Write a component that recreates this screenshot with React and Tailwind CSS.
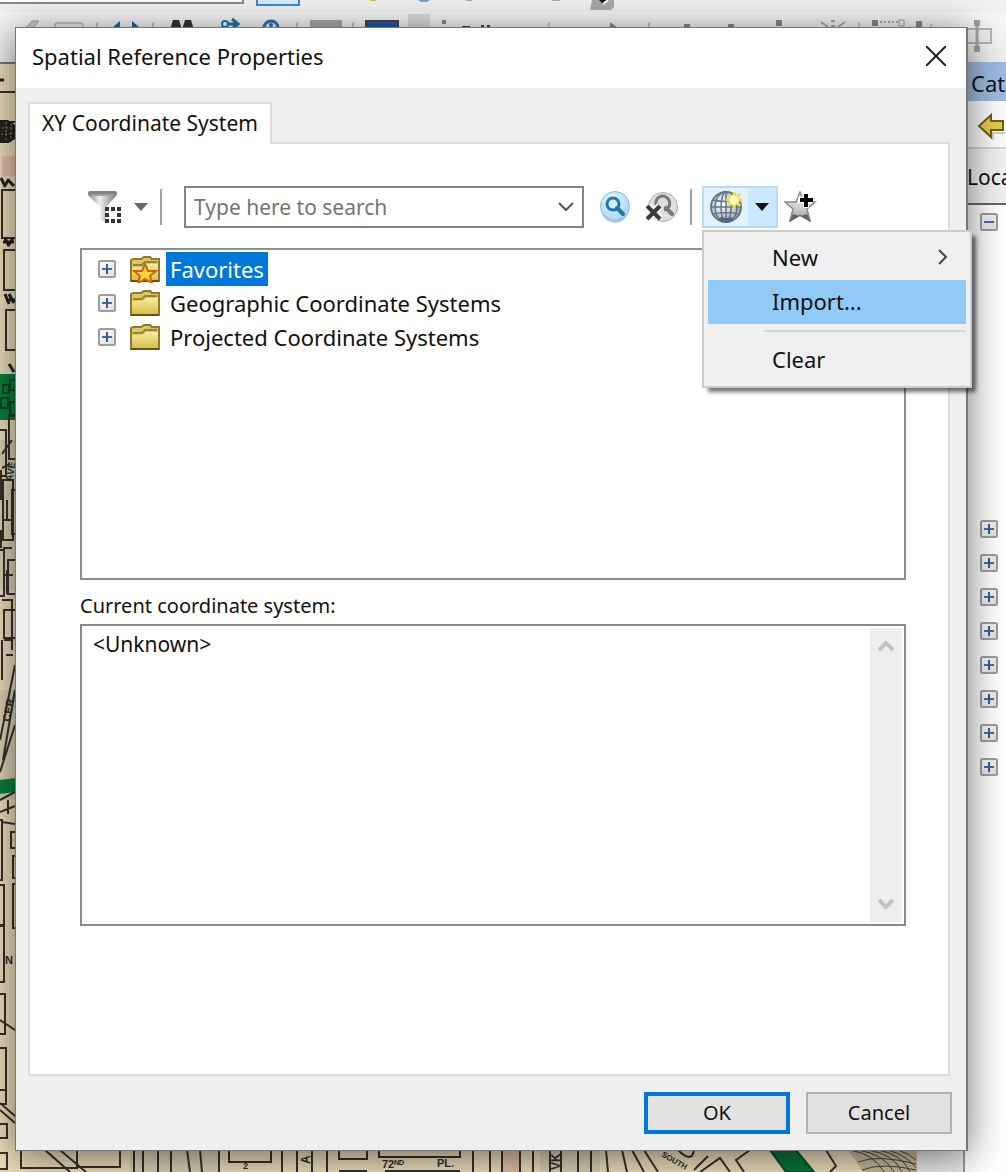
import React from "react";

const UI = "font-['Noto_Sans','Open_Sans',sans-serif]";

function Expander({ open = false }) {
  return (
    <svg width="18" height="18" viewBox="0 0 18 18" className="shrink-0" aria-hidden="true">
      <defs>
        <linearGradient id="exp" x1="0" y1="0" x2="1" y2="1">
          <stop offset="0" stopColor="#ffffff" />
          <stop offset="1" stopColor="#dedede" />
        </linearGradient>
      </defs>
      <rect x="1" y="1" width="16" height="16" rx="1.5" fill="url(#exp)" stroke="#9d9d9d" strokeWidth="2" />
      <path d="M4 9h10" stroke="#4d68ad" strokeWidth="2" />
      {!open && <path d="M9 4v10" stroke="#3f5798" strokeWidth="2" />}
    </svg>
  );
}

function Folder({ star = false }) {
  return (
    <svg width="30" height="28" viewBox="0 0 30 28" className="shrink-0" aria-hidden="true">
      <defs>
        <linearGradient id="fold" x1="0" y1="0" x2="0" y2="1">
          <stop offset="0" stopColor="#f6eca0" />
          <stop offset="1" stopColor="#d8bf4c" />
        </linearGradient>
      </defs>
      <path d="M1 26V5l2-1h8l3-2h6l2 2h7v22z" fill="#d9c768" stroke="#8f7b2c" strokeWidth="2" />
      <path d="M3 10h9l3-3h12" fill="none" stroke="#9a8534" strokeWidth="2" />
      <path d="M2 25V12h11l3-3h12v16z" fill="url(#fold)" />
      <path d="M1 26h28" stroke="#665412" strokeWidth="2" />
      {star && (
        <path
          d="M15 9l3 7h8l-6 5 2 7-7-4-7 4 2-7-6-5h8z"
          fill="#ffd53a"
          stroke="#cf6412"
          strokeWidth="2"
        />
      )}
    </svg>
  );
}

function FilterIcon() {
  return (
    <svg width="34" height="34" viewBox="0 0 34 34" aria-hidden="true">
      <defs>
        <linearGradient id="fun" x1="0" y1="0" x2="1" y2="0">
          <stop offset="0" stopColor="#8c8c8c" />
          <stop offset=".4" stopColor="#f1f1f1" />
          <stop offset="1" stopColor="#777" />
        </linearGradient>
      </defs>
      <path d="M1 4h27v2L18 17v15l-6-2V17L1 6z" fill="url(#fun)" />
      <rect x="0" y="1" width="29" height="5" rx="2" fill="#828282" />
      <path d="M3 5h23" stroke="#bbb" />
      <rect x="18" y="18" width="15" height="15" fill="#fff" />
      <g fill="#333">
        {[17, 23, 29].map((x) =>
          [17, 23, 29].map((y) => (x === 23 && y === 23 ? null : <rect key={x + "-" + y} x={x} y={y} width="4" height="4" />))
        )}
      </g>
    </svg>
  );
}

function SearchIcon() {
  return (
    <svg width="32" height="34" viewBox="0 0 32 34" aria-hidden="true">
      <defs>
        <radialGradient id="srch" cx=".4" cy=".35" r=".7">
          <stop offset="0" stopColor="#eaf6ff" />
          <stop offset="1" stopColor="#a5d3f4" />
        </radialGradient>
      </defs>
      <ellipse cx="16" cy="18" rx="14" ry="15" fill="#c5c9cc" />
      <circle cx="16" cy="16" r="14.5" fill="url(#srch)" stroke="#86bce3" />
      <circle cx="14" cy="14" r="6" fill="#d9efff" stroke="#1c77ad" strokeWidth="3" />
      <path d="M18 18l6 6" stroke="#1c77ad" strokeWidth="4" strokeLinecap="round" />
    </svg>
  );
}

function ClearSearchIcon() {
  return (
    <svg width="32" height="34" viewBox="0 0 32 34" aria-hidden="true">
      <circle cx="17" cy="17" r="14.5" fill="#dedede" stroke="#adadad" />
      <path d="M10 15a7 7 0 1 1 8 5" fill="none" stroke="#777" strokeWidth="3" />
      <path d="M20 18l6 6" stroke="#777" strokeWidth="4" strokeLinecap="round" />
      <path d="M2 16l12 12M14 16L2 28" stroke="#f3f3f3" strokeWidth="8" />
      <path d="M1 16l13 13M14 16L1 29" stroke="#3b3b3b" strokeWidth="4" />
    </svg>
  );
}

function GlobeIcon() {
  return (
    <svg width="34" height="34" viewBox="0 0 34 34" aria-hidden="true">
      <defs>
        <radialGradient id="glb" cx=".4" cy=".4" r=".65">
          <stop offset="0" stopColor="#ffffff" />
          <stop offset="1" stopColor="#96a7b8" />
        </radialGradient>
      </defs>
      <circle cx="17" cy="17" r="15" fill="url(#glb)" stroke="#66778a" strokeWidth="2" />
      <g fill="none" stroke="#62758a" strokeWidth="1.5">
        <ellipse cx="17" cy="17" rx="5" ry="15" />
        <ellipse cx="17" cy="17" rx="11" ry="15" />
        <path d="M17 2v30M2 17h30M4 10q13 3 26 0M4 24q13-3 26 0" />
      </g>
      <path d="M9 30q8 4 16 0l-3-3q-5 2-10 0z" fill="#53667b" />
      <g stroke="#eedd58" strokeWidth="3">
        <path d="M25 2v16M17 10h16M19 4l12 12M31 4L19 16" />
      </g>
      <circle cx="25" cy="10" r="5" fill="#fffbb0" stroke="#f3e46a" />
    </svg>
  );
}

function AddStarIcon() {
  return (
    <svg width="34" height="32" viewBox="0 0 34 32" aria-hidden="true">
      <defs>
        <linearGradient id="adds" x1="0" y1="0" x2="0" y2="1">
          <stop offset="0" stopColor="#ffffff" />
          <stop offset="1" stopColor="#a2a2a2" />
        </linearGradient>
      </defs>
      <path d="M16 1l4 10h11l-8 7 3 12-10-6-10 6 3-12-8-7h11z" fill="url(#adds)" stroke="#888" strokeWidth="1.5" />
      <path d="M5 31l4-8 7 2 7-2 4 8-11-6z" fill="#666" />
      <path d="M22 2v15M14 9h15" stroke="#fff" strokeWidth="6" />
      <path d="M22 3v13M16 9h13" stroke="#000" strokeWidth="4" />
    </svg>
  );
}

function Caret({ className }) {
  return (
    <svg width="14" height="8" viewBox="0 0 14 8" className={className} aria-hidden="true">
      <path d="M0 0h14L7 8z" fill="currentColor" />
    </svg>
  );
}

function Chevron({ className, d = "M1 1l7 7 7-7", w = 16, h = 10, sw = 2 }) {
  return (
    <svg width={w} height={h} className={className} aria-hidden="true">
      <path d={d} fill="none" stroke="currentColor" strokeWidth={sw} />
    </svg>
  );
}

function ToolStripIcons() {
  return (
    <svg width="960" height="50" viewBox="0 12 960 50" className="shrink-0" aria-hidden="true">
      <path d="M24 30l8-9h7l-8 9" fill="#ccc" stroke="#999" />
      <rect x="55" y="23" width="28" height="16" rx="2" fill="#eee" stroke="#999" />
      <path d="M97 22v20M153 22v20M297 22v20M353 22v20M549 22v20M649 22v20M859 22v20M931 24v20" stroke="#999" />
      <path d="M112 28l8-7v7zM140 28l-8-7v7z" fill="#1766ad" />
      <path d="M170 30l3-10h6l3 10M182 30l3-10h6l3 10" fill="#333" />
      <path d="M226 24h10M232 19l6 5-6 5" stroke="#1d76ad" strokeWidth="3" fill="none" />
      <circle cx="225" cy="24" r="3" fill="#fff" stroke="#1d76ad" strokeWidth="2" />
      <circle cx="271" cy="28" r="7" fill="#eef" stroke="#2273b0" strokeWidth="3" />
      <circle cx="271" cy="25" r="2" fill="#2273b0" />
      <path d="M310 20h32v10h-32z" fill="#aaa" />
      <path d="M366 21h32v10h-32z" fill="#2457a8" stroke="#444" strokeWidth="2" />
      <path d="M408 14h22v40h-22z" fill="#dcdcdc" />
      <path d="M442 20h4v4h-4z" fill="#888" />
      <path d="M462 26h8v4h-8zM481 25h3v4h-3zM487 25h3v4h-3z" fill="#444" />
      <path d="M610 22l8 6h-8zM684 24h6v5h-6zM728 24h6v5h-6zM776 20h6v6h-6zM872 20h6v6h-6zM916 21h6v6h-6z" fill="#888" />
      <path d="M821 22l7 5M845 22l-7 5M831 21h4M831 26h4" stroke="#aaa" strokeWidth="2" />
      <path d="M880 22h18" stroke="#aaa" strokeWidth="2" strokeDasharray="2 2" />
      <rect x="899" y="20" width="5" height="6" fill="none" stroke="#999" />
    </svg>
  );
}

const BLOCKS_LEFT = [
  [-4, 92, 22, 30], [2, 190, 18, 48], [4, 250, 18, 40], [6, 310, 18, 40], [-6, 430, 12, 46], [9, 415, 10, 44],
  [3, 480, 10, 60], [12, 490, 10, 44], [-6, 550, 10, 46], [8, 560, 12, 34], [4, 610, 12, 28], [-4, 820, 6, 60],
  [11, 832, 9, 16], [13, 856, 9, 22], [-4, 885, 8, 40], [13, 884, 9, 44], [-4, 926, 8, 56], [-6, 994, 11, 40],
  [-6, 1048, 12, 42], [-6, 1090, 12, 14], [-6, 1124, 13, 14], [-6, 1153, 13, 16], [21, 1145, 56, 23], [77, 1145, 43, 22],
  [229, 1140, 42, 22], [339, 1140, 28, 19], [379, 1140, 81, 17],
];

function MapCanvas() {
  return (
    <svg width="917" height="1108" viewBox="0 64 917 1108" className="shrink-0" aria-hidden="true">
      <rect x="0" y="64" width="917" height="1108" fill="#efdfbd" />
      <g fill="#ddd2b6">
        <path d="M0 440h15v150H0zM0 690h15v110H0zM130 1150h90v22h-90zM540 1150h60v22h-60z" />
      </g>
      <path d="M503 1150h16v22h-16zM2 156h13v20H2z" fill="#e6c1ac" />
      <path d="M0 374h15v46H0zM0 780l15-2v14l-15 2z" fill="#08803e" />
      <path d="M3 385h6v8H3zM10 380h6v10h-6zM1 398h7v10H1zM10 402h6v14h-6z" fill="none" stroke="#064a24" strokeWidth="2" />
      <g fill="none" stroke="#37332a" strokeWidth="2">
        {BLOCKS_LEFT.map(([x, y, w, h]) => (
          <rect key={x + "," + y} x={x} y={y} width={w} height={h} />
        ))}
      </g>
      <path d="M0 120h8l7 5v14l-6 4H0z" fill="#25221c" />
      <path d="M2 128h10M1 134h12M6 122v18M11 124v16" stroke="#8d826a" strokeDasharray="2 2" />
      <path
        d="M0 80h4M1 178l4 8M4 187l5-8M8 180l6 6M5 238l4 8M8 246l5-8M3 242h11M5 294l4 10M9 294l5 9M6 300h9M9 364l5 8"
        stroke="#25221c"
        strokeWidth="3"
        fill="none"
      />
      <g stroke="#37332a" strokeWidth="2" fill="none">
        <path d="M15 665L0 740M15 690L3 760M15 725L0 772M0 800l15-8M0 812l15-6M2 822l13 2M0 1020l15 10" />
        <path d="M0 1103l15 13M0 1110l15 13M45 1150l25 22M60 1150l26 22" />
        <path d="M2 454l10-14M2 468l8-4M4 520h8M3 548h9M5 575h8M2 600h11M4 640h8M6 655h7" />
        <path d="M1 470v30M7 500v20M1 530v18M7 570v24M2 640v40M12 600v50M8 800v14" />
      </g>
      <g fill="none" stroke="#37332a" strokeWidth="2">
        <path d="M134 1150v22M143 1150v22M158 1150v22M171 1150v22M187 1150l3 22M200 1150l2 22M219 1150v22M282 1150v22M297 1150v22M312 1150v22M327 1150v22M473 1150v22M490 1150v22" />
        <path d="M502 1150v22M520 1150v22M533 1150v22M550 1150v22M561 1150v22M578 1150v22M591 1150v22M606 1150l2 22M622 1150l5 22M632 1150l12 22M644 1150l14 22" />
        <path d="M700 1172l20-14 10 14M750 1150l-14 10 8 12M826 1150l10 16-6 6M339 1171h28M385 1171h75" />
        <path d="M678 1150q14 14 16 0M694 1170l14-14" />
      </g>
      <path d="M770 1150h26l18 22h-28z" fill="#08763a" stroke="#0a4f2a" strokeWidth="2" />
      <path d="M848 1150h69v22h-54z" fill="#c9ba9d" />
      <g stroke="#4d4537" fill="none">
        <path d="M850 1150q24 4 34 22M858 1150q26 4 36 22M868 1150q26 4 34 22M878 1150q24 4 32 22M888 1150q20 6 28 18M898 1150q12 4 18 10M858 1162q20-8 58 2M862 1170q20-8 54 0" />
      </g>
      <g fill="#332f27" className="font-['Liberation_Sans',sans-serif] font-bold">
        <text x="382" y="1168" fontSize="11">72ᴺᴰ</text>
        <text x="437" y="1167" fontSize="11">PL.</text>
        <text x="243" y="1169" fontSize="9">2</text>
        <text transform="translate(310 1164) rotate(-90)" fontSize="12">A</text>
        <text transform="translate(560 1170) rotate(-90)" fontSize="12">VK</text>
        <text transform="translate(661 1156) rotate(30)" fontSize="8">SOUTH</text>
        <text transform="translate(10 722) rotate(-80)" fontSize="11">CER.</text>
        <text transform="translate(12 482) rotate(-80)" fontSize="10">AVE</text>
        <text x="5" y="964" fontSize="11">N</text>
      </g>
    </svg>
  );
}

function Catalog() {
  return (
    <aside className="flex w-[41px] shrink-0 flex-col overflow-hidden bg-white">
      <h2 className="h-[39px] shrink-0 whitespace-nowrap bg-[#9dbbe0] pl-[6px] text-[22px] leading-[42px] text-[#111]">Catalog</h2>
      <div className="flex h-[48px] shrink-0 items-center border-b-2 border-[#d5d5d5] bg-[#fbfbfb] pl-3 pt-1">
        <button type="button" aria-label="Back" className="shrink-0">
          <svg width="28" height="28" viewBox="0 0 28 28" aria-hidden="true">
            <path d="M4 16L16 27v-6h12" fill="none" stroke="#ccc" strokeWidth="2" />
            <path d="M2 14L14 3v6h12v9H14v7z" fill="#e2cb4e" stroke="#6f6010" strokeWidth="2" />
          </svg>
        </button>
      </div>
      <div className="flex h-[56px] shrink-0 items-center border-b-2 border-[#666] bg-[#f1f1f1] pl-[2px] pt-1 text-[21px] text-[#111]">
        Location:
      </div>
      <div className="flex flex-col pl-[15px] pt-2">
        <Expander open />
        <div className="mt-[289px] flex flex-col gap-4">
          {[0, 1, 2, 3, 4, 5, 6, 7].map((i) => (
            <Expander key={i} />
          ))}
        </div>
      </div>
    </aside>
  );
}

function Workspace() {
  return (
    <div className="col-start-1 row-start-1 flex h-full min-w-0 flex-col overflow-hidden bg-[#eeeeee]">
      <div className="flex h-3 shrink-0 items-start bg-[#f1f1f1]">
        <div className="h-1 w-[244px] border-b-2 border-r-2 border-[#888] bg-white" />
        <div className="ml-3 h-[6px] w-[44px] border-2 border-t-0 border-[#2f8add] bg-[#dcebf7]" />
        <svg width="330" height="12" viewBox="300 0 330 12" aria-hidden="true">
          <path d="M370 0h6v1h-6z" fill="#e0c050" />
          <path d="M418 0h12l-3 2h-6z" fill="#7ba4cf" />
          <path d="M466 0h6v1h-6zM552 0h8v1h-8z" fill="#aaa" />
          <path d="M592 0h22v7l-3 3h-21z" fill="#a8a8a8" />
          <path d="M599 0h8l-4 4z" fill="#111" />
          <path d="M603 4l5-4" stroke="#fff" strokeWidth="2" />
        </svg>
      </div>
      <div className="flex h-[50px] shrink-0 items-start overflow-hidden bg-gradient-to-b from-[#f7f7f7] to-[#eeeeee]">
        <ToolStripIcons />
        <svg width="40" height="50" viewBox="0 0 40 50" className="shrink-0" aria-hidden="true">
          <rect x="4" y="17" width="27" height="14" fill="#eee" stroke="#b3b3b3" strokeWidth="2" />
          <path d="M17 10v28" stroke="#a3a3a3" strokeWidth="3" />
          <path d="M14 8h6v6h-6zM14 34h6v6h-6z" fill="#a0a0a0" />
        </svg>
      </div>
      <div className="flex min-h-0 flex-1">
        <div className="flex min-w-0 flex-1 flex-col overflow-hidden border-r-2 border-[#999] bg-[#ececec]">
          <div className="h-0 w-full border-t-2 border-[#777]" />
          <MapCanvas />
        </div>
        <Catalog />
      </div>
    </div>
  );
}

function ImportMenu() {
  return (
    <div
      role="menu"
      className="absolute left-0 top-[44px] z-10 flex w-[270px] flex-col border-2 border-[#cccccc] bg-[#f0f0f0] p-1 text-[22px] text-[#111] shadow-[5px_5px_4px_-1px_rgba(0,0,0,0.55)]"
    >
      <button type="button" role="menuitem" className="flex h-11 items-center justify-between pb-[2px] pl-16 pr-[18px]">
        New
        <Chevron w={10} h={16} d="M1 1l7 7-7 7" sw={2} className="text-[#444]" />
      </button>
      <button type="button" role="menuitem" className="flex h-11 items-center bg-[#91c9f7] pb-[2px] pl-16">
        Import...
      </button>
      <div role="separator" className="my-[6px] ml-14 border-t-2 border-[#d7d7d7]" />
      <button type="button" role="menuitem" className="flex h-11 items-center pb-[2px] pl-16">
        Clear
      </button>
    </div>
  );
}

function Toolbar() {
  return (
    <div className="flex h-[42px] items-center pl-2">
      <button type="button" aria-label="Spatial filter" className="flex shrink-0 items-center gap-3">
        <FilterIcon />
        <Caret className="text-[#6a6a6a]" />
      </button>
      <div className="ml-3 h-9 w-[2px] shrink-0 bg-[#a3a3a3]" />
      <div className="ml-[22px] flex h-[42px] min-w-0 flex-1 items-center border-2 border-[#858585] bg-white">
        <input
          type="text"
          aria-label="Search coordinate systems"
          placeholder="Type here to search"
          className="min-w-0 flex-1 pl-2 text-[21px] leading-7 outline-none placeholder:text-[#757575]"
        />
        <button type="button" aria-label="Search history" className="px-2">
          <Chevron className="text-[#555]" />
        </button>
      </div>
      <button type="button" aria-label="Search" className="ml-[15px] shrink-0">
        <SearchIcon />
      </button>
      <button type="button" aria-label="Clear search" className="ml-[15px] shrink-0">
        <ClearSearchIcon />
      </button>
      <div className="ml-3 h-9 w-[2px] shrink-0 bg-[#a3a3a3]" />
      <div className="relative ml-[10px] flex h-[42px] shrink-0 border-2 border-[#b5dcfb]">
        <button type="button" aria-label="Add coordinate system" className="flex w-11 items-center justify-center bg-[#e3f1fd]">
          <GlobeIcon />
        </button>
        <button type="button" aria-label="Coordinate system menu" aria-expanded="true" className="flex w-7 items-center justify-center bg-[#cce8ff]">
          <Caret className="text-[#111]" />
        </button>
        <div className="absolute -left-[2px] -top-[2px]">
          <ImportMenu />
        </div>
      </div>
      <button type="button" aria-label="Add to favorites" className="ml-[6px] mr-[88px] shrink-0">
        <AddStarIcon />
      </button>
    </div>
  );
}

const TREE = [
  { name: "Favorites", star: true, selected: true },
  { name: "Geographic Coordinate Systems" },
  { name: "Projected Coordinate Systems" },
];

function Dialog() {
  return (
    <section
      role="dialog"
      aria-labelledby="dialog-title"
      className="z-10 col-start-1 row-start-1 mb-[21px] ml-[15px] mr-[38px] mt-[27px] flex flex-col border border-r-2 border-[#777] bg-[#efefef] shadow-[0_6px_36px_rgba(0,0,0,0.55)]"
    >
      <header className="flex h-[60px] shrink-0 items-center justify-between bg-white pb-1 pl-4 pr-5">
        <h1 id="dialog-title" className="text-[22px] text-[#111]">Spatial Reference Properties</h1>
        <button type="button" aria-label="Close">
          <svg width="20" height="20" viewBox="0 0 20 20" aria-hidden="true">
            <path d="M0 0l20 20M20 0L0 20" stroke="#222" strokeWidth="2" />
          </svg>
        </button>
      </header>

      <div className="flex flex-1 flex-col pl-3 pr-4 pt-[14px]">
        <div role="tablist" className="flex">
          <button
            type="button"
            role="tab"
            aria-selected="true"
            className="z-10 -mb-[2px] h-[42px] border-2 border-b-0 border-[#dcdcdc] bg-white px-3 pb-[2px] text-[21px] leading-none text-[#111]"
          >
            XY Coordinate System
          </button>
        </div>
        <div role="tabpanel" className="flex flex-1 flex-col border-2 border-[#dcdcdc] bg-white pl-[50px] pr-[42px] pt-[42px]">
          <Toolbar />
          <ul role="tree" className="mt-5 h-[332px] border-2 border-[#8a9097] bg-white pl-4 pt-[2px]">
            {TREE.map((n) => (
              <li key={n.name} role="treeitem" className="flex h-[34px] items-center">
                <Expander />
                <span className="ml-[14px]">
                  <Folder star={n.star} />
                </span>
                <span
                  className={
                    n.selected
                      ? "ml-[6px] bg-[#0078d7] px-1 text-[22px] leading-[34px] text-white"
                      : "ml-[6px] px-1 text-[22px] leading-[34px] text-[#111]"
                  }
                >
                  {n.name}
                </span>
              </li>
            ))}
          </ul>
          <label htmlFor="current" className="mt-[10px] pb-[2px] text-[20px] leading-8 text-[#111]">
            Current coordinate system:
          </label>
          <div className="flex h-[302px] border-2 border-[#8a8a8a] bg-white">
            <textarea
              id="current"
              readOnly
              defaultValue="<Unknown>"
              className="min-w-0 flex-1 resize-none overflow-hidden pl-[11px] pt-1 text-[21px] leading-7 text-[#111] outline-none"
            />
            <div className="my-[2px] mr-[2px] flex w-8 flex-col items-center justify-between bg-[#efefef] py-3 text-[#c2c2c2]">
              <Chevron d="M1 10l7-7 7 7" h={12} sw={4} />
              <Chevron d="M1 2l7 7 7-7" h={12} sw={4} />
            </div>
          </div>
        </div>
      </div>

      <footer className="flex shrink-0 justify-end gap-4 pb-4 pr-[14px] pt-4 text-[20px] text-[#111]">
        <button type="button" className="h-[42px] w-[146px] border-4 border-[#0078d7] bg-[#e1e1e1] leading-none">
          OK
        </button>
        <button type="button" className="h-[42px] w-[146px] border-2 border-[#b3b3b3] bg-[#e1e1e1] leading-none">
          Cancel
        </button>
      </footer>
    </section>
  );
}

export default function App() {
  return (
    <main className={"grid h-screen grid-cols-1 grid-rows-1 overflow-hidden " + UI}>
      <Workspace />
      <Dialog />
    </main>
  );
}
